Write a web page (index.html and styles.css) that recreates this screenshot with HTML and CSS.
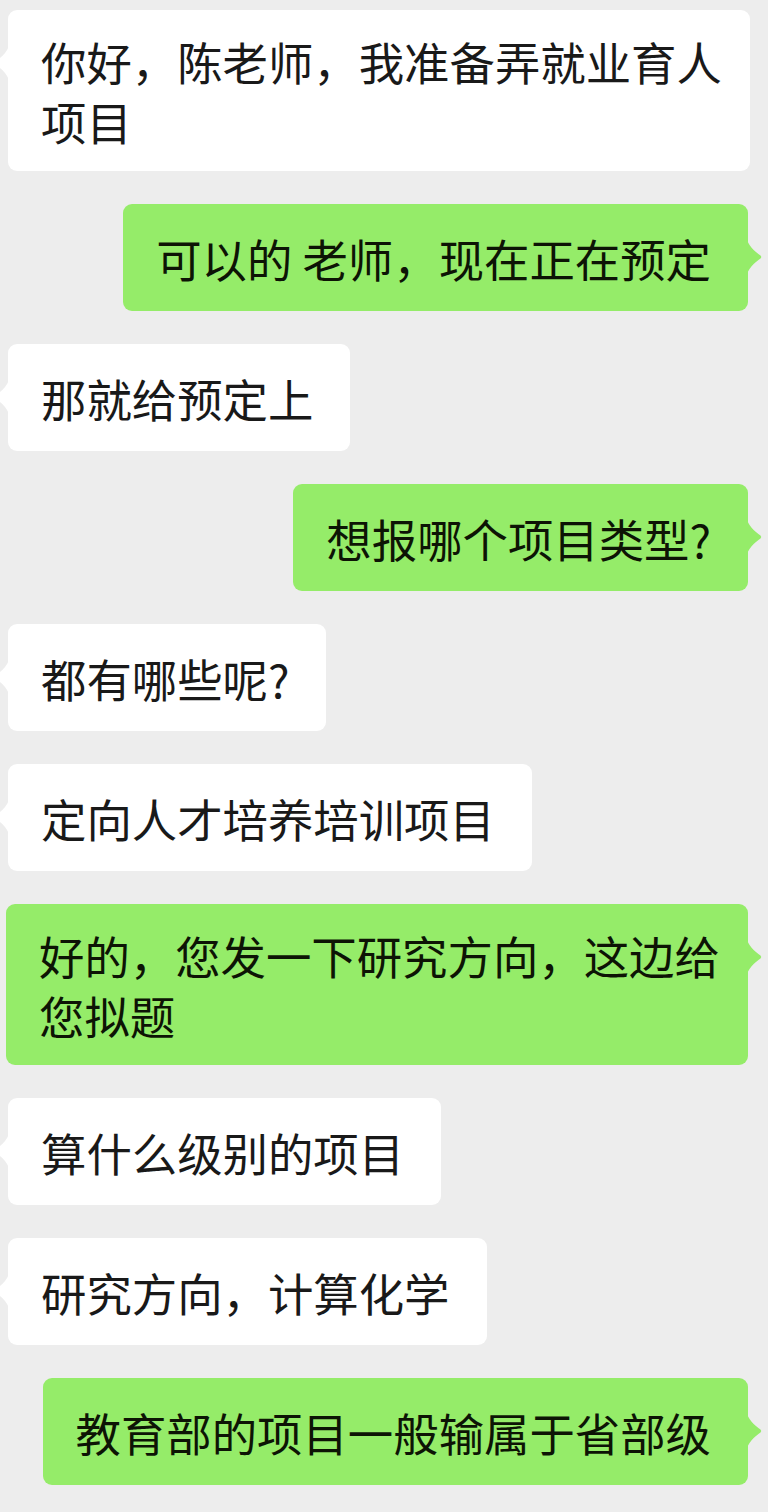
FILE: index.html
```html
<!DOCTYPE html>
<html lang="zh-CN">

<head>
    <title>聊天记录</title>
    <meta charset="UTF-8">
    <meta name="viewport" content="width=device-width, initial-scale=1.0">
    <link rel="stylesheet" href="styles.css">
</head>

<body>
    <div class="chat">
        <div class="row them">
            <div class="bubble multi">你好，陈老师，我准备弄就业育人项目</div>
        </div>
        <div class="row me">
            <div class="bubble">可以的 老师，现在正在预定</div>
        </div>
        <div class="row them">
            <div class="bubble">那就给预定上</div>
        </div>
        <div class="row me">
            <div class="bubble">想报哪个项目类型?</div>
        </div>
        <div class="row them">
            <div class="bubble">都有哪些呢?</div>
        </div>
        <div class="row them">
            <div class="bubble">定向人才培养培训项目</div>
        </div>
        <div class="row me">
            <div class="bubble multi">好的，您发一下研究方向，这边给您拟题</div>
        </div>
        <div class="row them">
            <div class="bubble">算什么级别的项目</div>
        </div>
        <div class="row them">
            <div class="bubble">研究方向，计算化学</div>
        </div>
        <div class="row me">
            <div class="bubble">教育部的项目一般输属于省部级</div>
        </div>
    </div>
</body>

</html>
```

FILE: styles.css
```css
body {
    margin: 0;
    background-color: #ededed;
    font-family: "Noto Sans CJK SC", "Noto Sans", sans-serif;
}

.chat {
    display: flex;
    flex-direction: column;
    gap: 33px;
    padding: 10px 20px 27px 8px;
}

.row {
    display: flex;
}

.row.me {
    justify-content: flex-end;
}

.bubble {
    position: relative;
    flex-shrink: 0;
    box-sizing: border-box;
    display: flex;
    align-items: center;
    max-width: 742px;
    min-height: 107px;
    padding: 20.5px 37px 20.5px 33px;
    border-radius: 9px;
    font-size: 45.4px;
    line-height: 60px;
    color: #191919;
    background-color: #ffffff;
}

.bubble.multi {
    padding-right: 27px;
}

.me .bubble {
    background-color: #95ec69;
    color: #0d1405;
}

/* little arrow on the side of each bubble */
.bubble::after {
    content: "";
    position: absolute;
    top: 36px;
    width: 15px;
    height: 34px;
    background-color: inherit;
    clip-path: path("M0 0 C3 8 9 12 13.5 15.5 Q15 17 13.5 18.5 C9 22 3 26 0 34 Z");
}

.me .bubble::after {
    right: -14px;
}

.them .bubble::after {
    left: -14px;
    transform: scaleX(-1);
}
```
